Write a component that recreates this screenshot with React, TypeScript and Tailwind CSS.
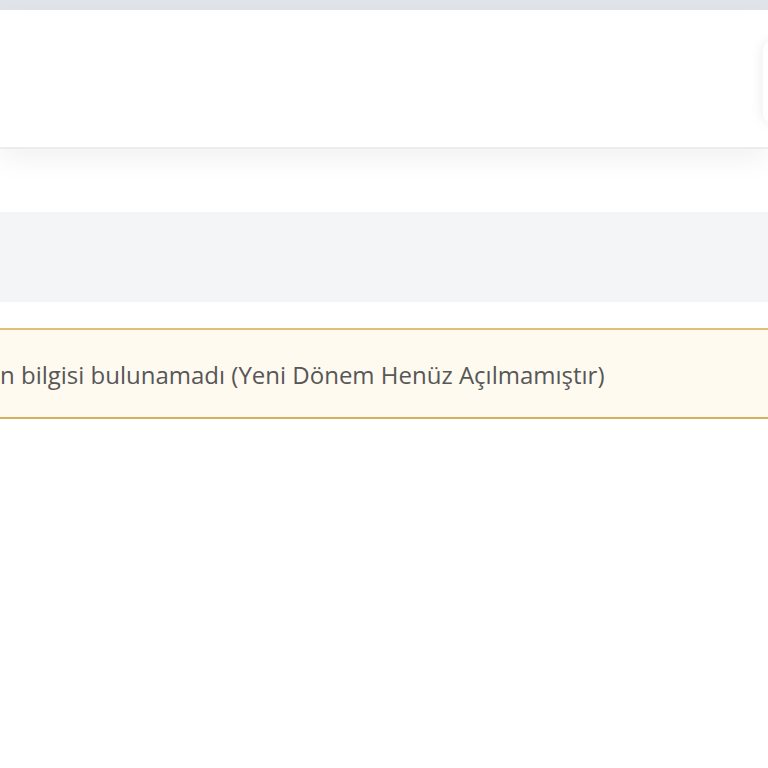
import React from "react";

export default function App() {
  return (
    <div
      className="min-h-[768px] w-full overflow-hidden bg-white"
      style={{ fontFamily: '"Open Sans", "Noto Sans", sans-serif' }}
    >
      {/* top bar strip */}
      <div className="h-[10px] bg-[#e0e4e9]" />

      {/* header card */}
      <div className="flex h-[139px] items-start justify-end border-b-2 border-[#ececec] bg-white shadow-[0_12px_24px_rgba(0,0,0,0.05)]">
        <div className="-mr-[43px] mt-[32px] h-[80px] w-[48px] shrink-0 rounded-lg bg-white shadow-[0_0_14px_rgba(0,0,0,0.09)]" />
      </div>

      {/* filter band */}
      <div className="mt-[63px] h-[90px] bg-[#f4f5f7]" />

      {/* warning notice */}
      <div className="mt-[26px] flex h-[91px] items-center border-y-2 border-t-[#dcc274] border-b-[#d5b15c] bg-[#fffaf0]">
        <div className="flex translate-y-[1px] whitespace-nowrap text-[24px] leading-none text-[#575757]">
          <div className="flex w-0 justify-end">
            <span className="shrink-0">Güncel döne</span>
          </div>
          <span>n bilgisi bulunamadı (Yeni Dönem Henüz Açılmamıştır)</span>
        </div>
      </div>
    </div>
  );
}
